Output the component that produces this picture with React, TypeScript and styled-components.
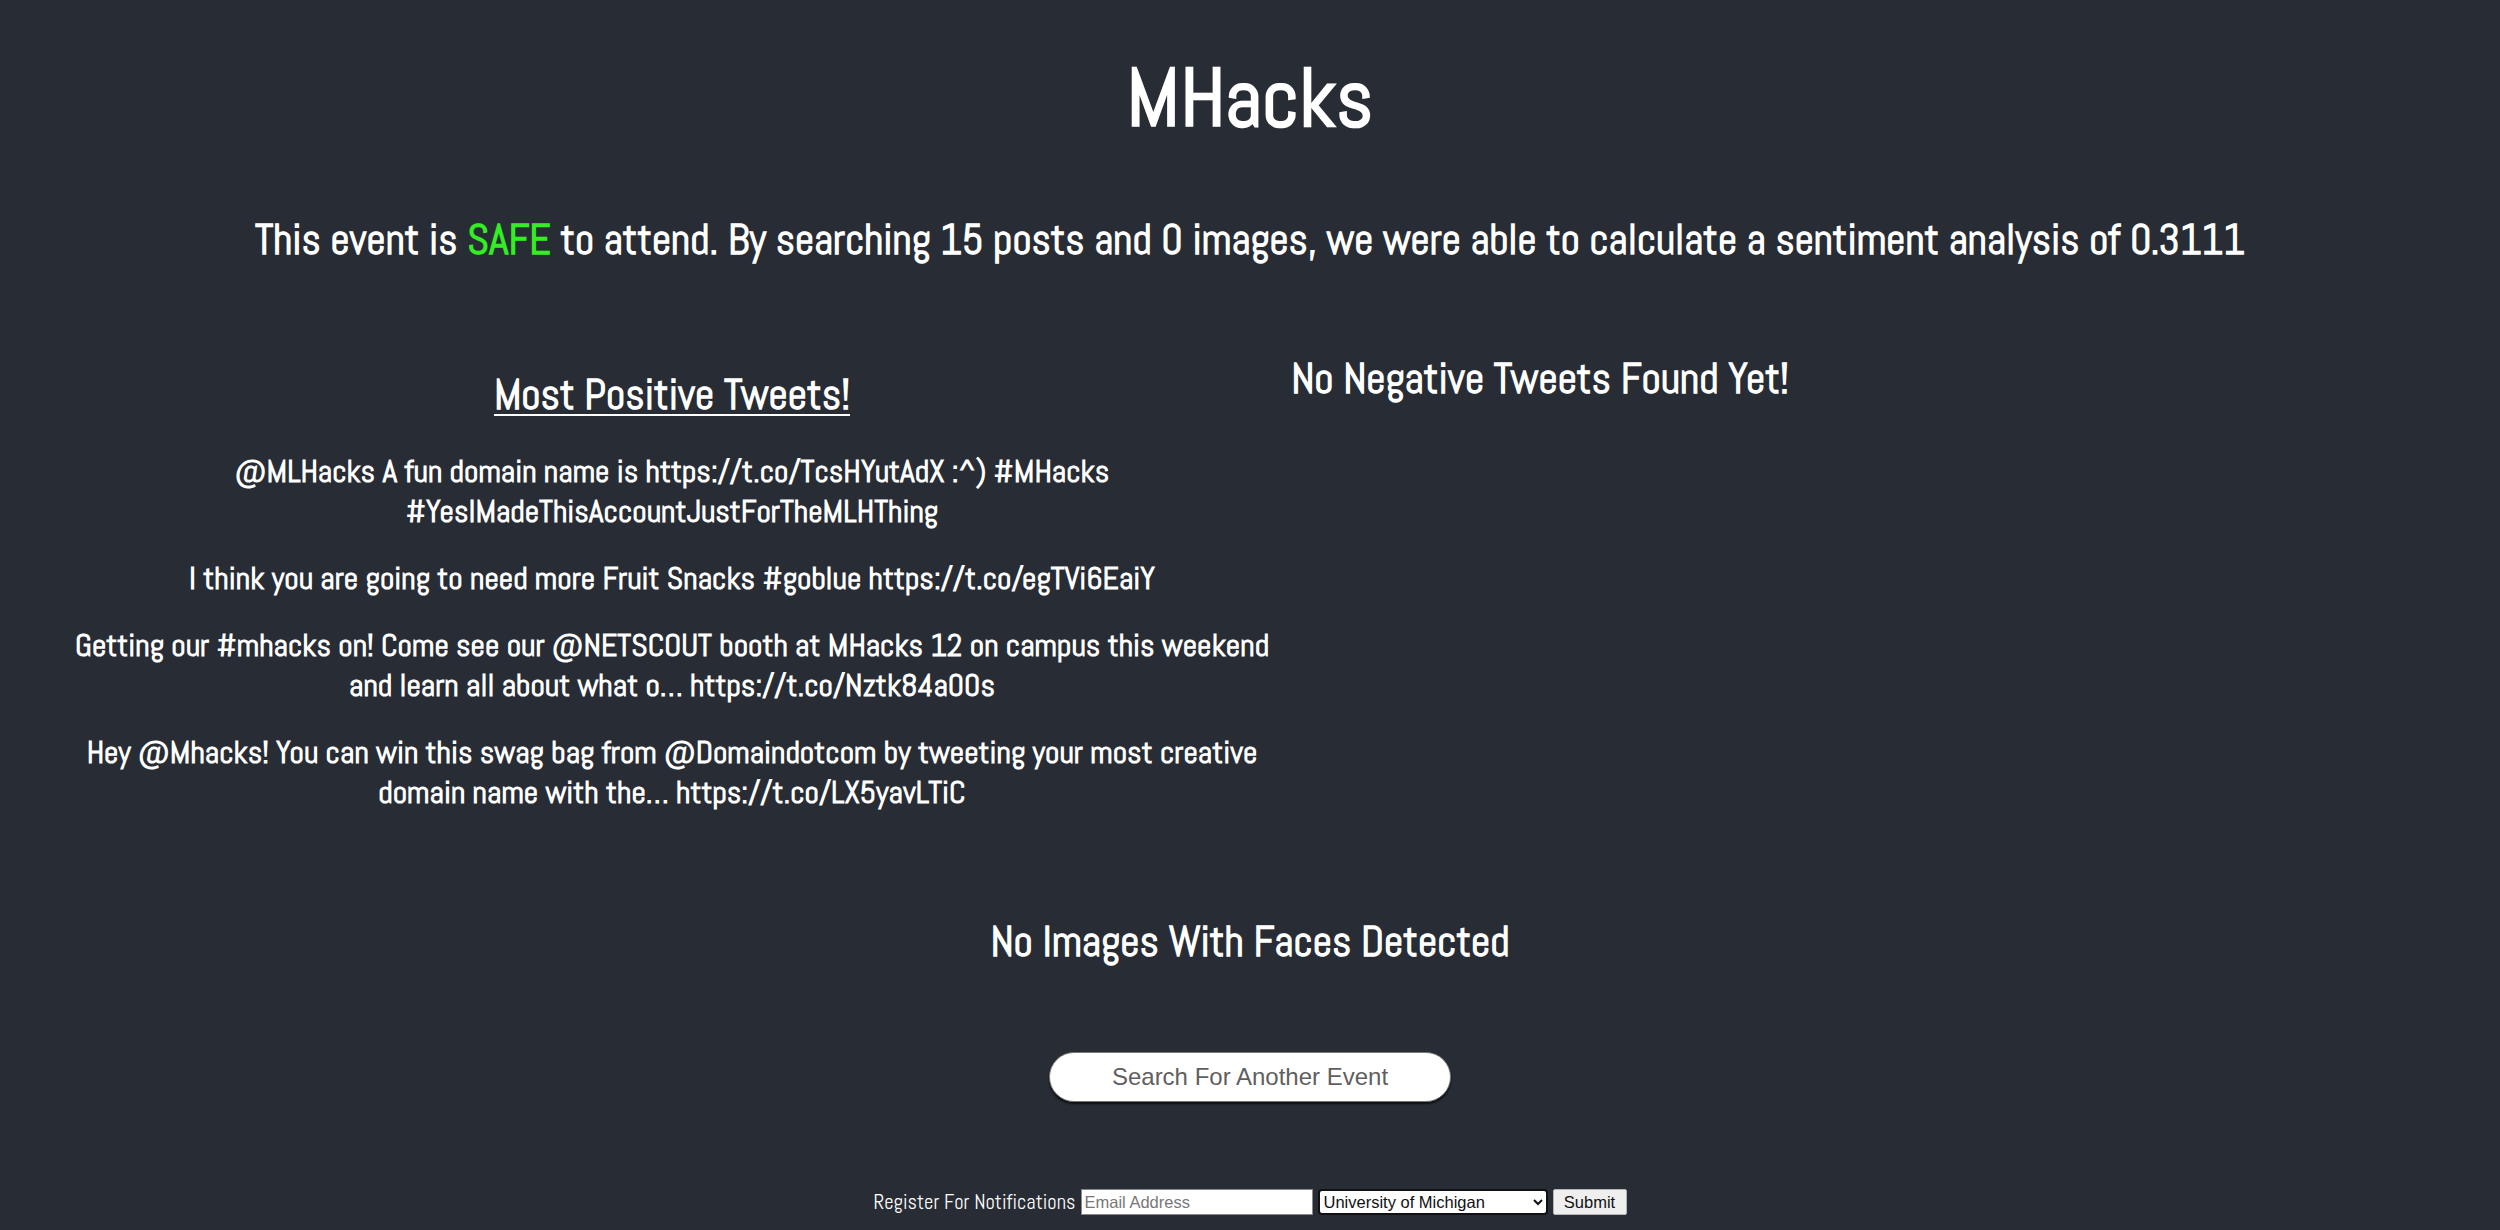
import React from "react";
import styled, { createGlobalStyle } from "styled-components";

const Global = createGlobalStyle`
  html, body { margin: 0; padding: 0; background: #282c34; }
  body { font-family: Abel, "Liberation Sans Narrow", "Roboto Condensed", sans-serif; color: #ffffff; }
  #root { min-height: 1230px; }
`;

const Page = styled.main`
  display: flex;
  flex-direction: column;
  align-items: center;
  text-align: center;
  padding-top: 52px;
`;

const Title = styled.h1`
  margin: 0;
  font-size: 82px;
  line-height: 92px;
  font-weight: bold;
`;

const Summary = styled.h2`
  margin: 71px 0 0;
  font-size: 42px;
  line-height: 50px;
  font-weight: bold;
  white-space: nowrap;
`;

const Safe = styled.span`
  color: #33ee22;
`;

const Columns = styled.section`
  align-self: stretch;
  display: grid;
  grid-template-columns: 1220px 496px;
  column-gap: 10px;
  padding-left: 62px;
  margin-top: 89px;
`;

const Column = styled.div<{ $offset?: number }>`
  display: flex;
  flex-direction: column;
  align-items: center;
  padding-top: ${(p) => p.$offset ?? 0}px;
`;

const SectionHeading = styled.h2<{ $underline?: boolean }>`
  margin: 0;
  font-size: 42.3px;
  line-height: 50px;
  font-weight: bold;
  white-space: nowrap;
  text-decoration: ${(p) => (p.$underline ? "underline" : "none")};
  text-decoration-thickness: 2px;
  text-underline-offset: 5px;
`;

const TweetList = styled.div`
  display: flex;
  flex-direction: column;
  gap: 27px;
  margin-top: 31px;
`;

const Tweet = styled.p`
  margin: 0;
  font-size: 31.7px;
  line-height: 40px;
  font-weight: bold;
`;

const FacesHeading = styled(SectionHeading)`
  margin-top: 105px;
`;

const SearchButton = styled.button`
  margin-top: 85px;
  width: 402px;
  height: 50px;
  border-radius: 25px;
  background: #ffffff;
  border: 1px solid #777;
  box-shadow: 0 2px 2px rgba(0, 0, 0, 0.7);
  color: #5f5f5f;
  font-family: "Liberation Sans", Arial, sans-serif;
  font-size: 24px;
  cursor: pointer;
`;

const Footer = styled.form`
  margin-top: 87px;
  display: flex;
  align-items: center;
  gap: 5px;
  height: 26px;
`;

const FooterLabel = styled.span`
  font-size: 20.6px;
  line-height: 26px;
  font-weight: normal;
`;

const EmailInput = styled.input`
  box-sizing: border-box;
  width: 232px;
  height: 26px;
  padding: 1px 3px;
  border: 1px solid #8a8a8a;
  background: #ffffff;
  font-family: "Liberation Sans", Arial, sans-serif;
  font-size: 16.5px;
  &::placeholder { color: #777; }
`;

const SchoolSelect = styled.select`
  box-sizing: border-box;
  width: 230px;
  height: 26px;
  border: 2px solid #111;
  border-radius: 4px;
  background: #ffffff;
  color: #111;
  font-family: "Liberation Sans", Arial, sans-serif;
  font-size: 16.5px;
`;

const SubmitButton = styled.button`
  box-sizing: border-box;
  width: 74px;
  height: 26px;
  border: 1px solid #b5b5b5;
  border-radius: 2px;
  background: #efefef;
  color: #111;
  font-family: "Liberation Sans", Arial, sans-serif;
  font-size: 16.5px;
  padding: 0;
`;

const tweets = [
  "@MLHacks A fun domain name is https://t.co/TcsHYutAdX :^) #MHacks #YesIMadeThisAccountJustForTheMLHThing",
  "I think you are going to need more Fruit Snacks #goblue https://t.co/egTVi6EaiY",
  "Getting our #mhacks on! Come see our @NETSCOUT booth at MHacks 12 on campus this weekend and learn all about what o… https://t.co/Nztk84a00s",
  "Hey @Mhacks! You can win this swag bag from @Domaindotcom by tweeting your most creative domain name with the… https://t.co/LX5yavLTiC",
];

export default function App() {
  return (
    <>
      <Global />
      <Page>
        <Title>MHacks</Title>
        <Summary>
          This event is <Safe>SAFE</Safe> to attend. By searching 15 posts and 0 images, we were able to
          calculate a sentiment analysis of 0.3111
        </Summary>
        <Columns>
          <Column $offset={16}>
            <SectionHeading $underline>Most Positive Tweets!</SectionHeading>
            <TweetList>
              {tweets.map((t) => (
                <Tweet key={t}>{t}</Tweet>
              ))}
            </TweetList>
          </Column>
          <Column>
            <SectionHeading>No Negative Tweets Found Yet!</SectionHeading>
          </Column>
        </Columns>
        <FacesHeading>No Images With Faces Detected</FacesHeading>
        <SearchButton type="button">Search For Another Event</SearchButton>
        <Footer onSubmit={(e) => e.preventDefault()}>
          <FooterLabel>Register For Notifications</FooterLabel>
          <EmailInput type="email" placeholder="Email Address" />
          <SchoolSelect defaultValue="umich">
            <option value="umich">University of Michigan</option>
          </SchoolSelect>
          <SubmitButton type="submit">Submit</SubmitButton>
        </Footer>
      </Page>
    </>
  );
}
